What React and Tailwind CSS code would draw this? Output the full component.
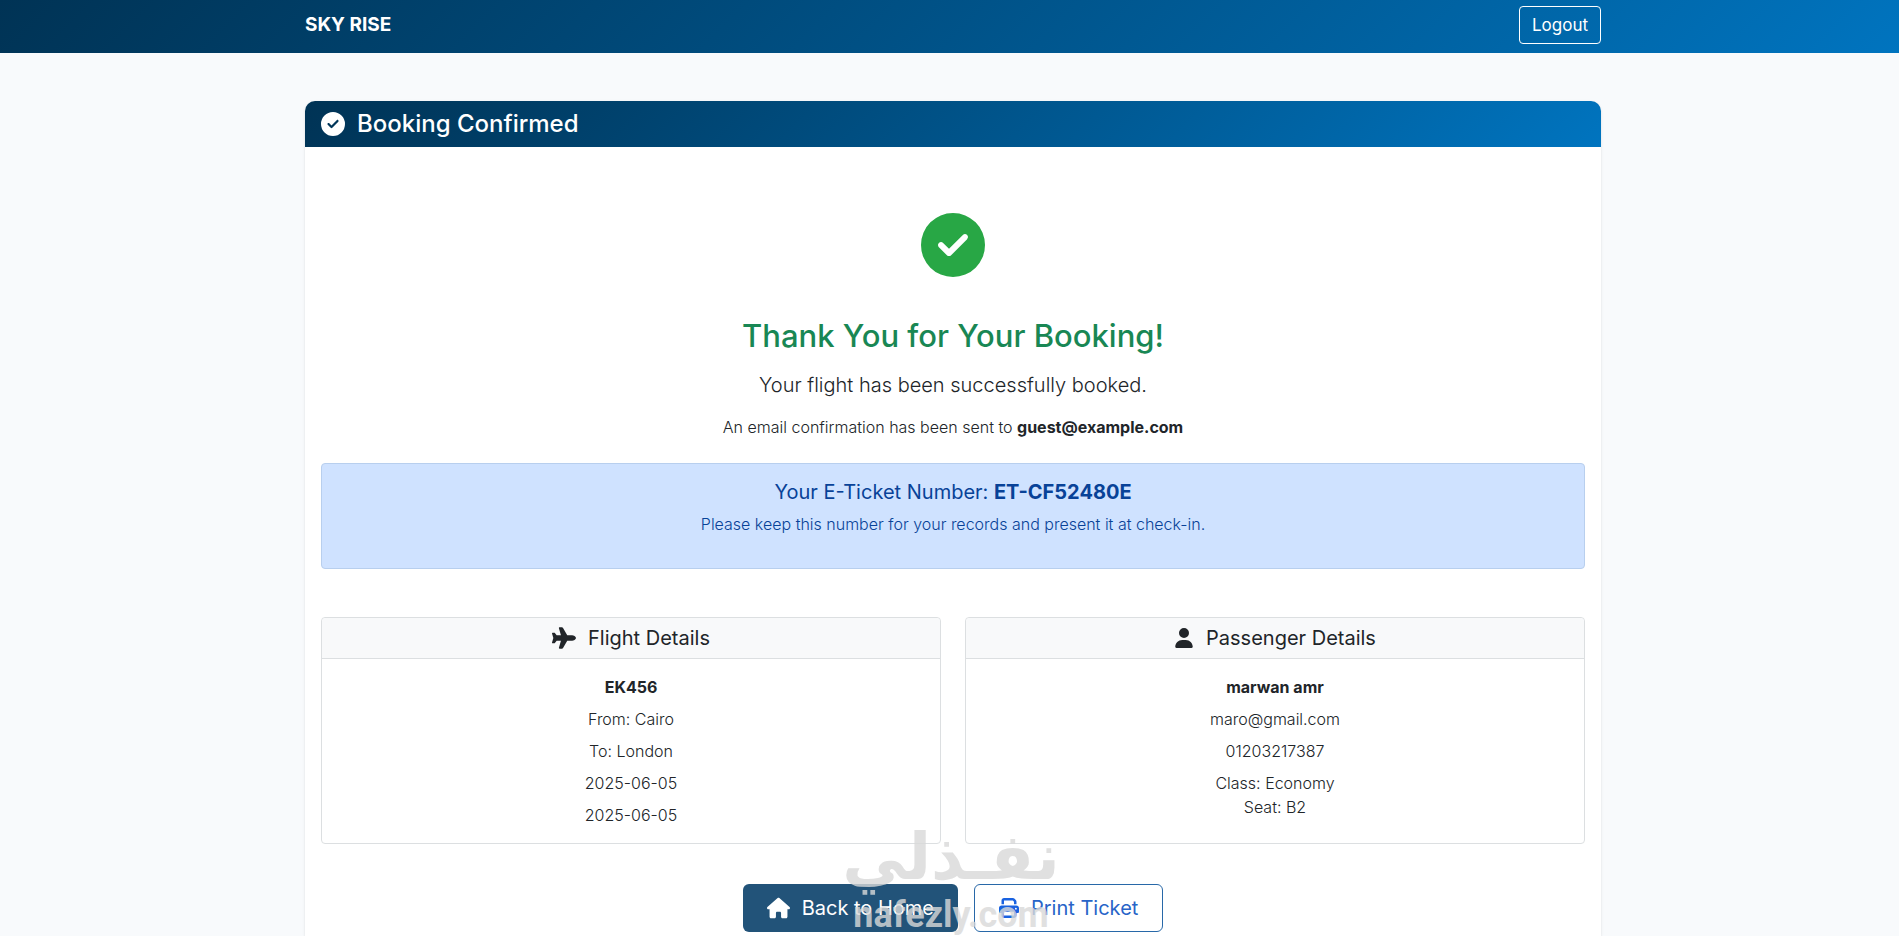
import React from "react";
import { FaPlane, FaUser, FaPrint, FaCircleCheck, FaHouse } from "react-icons/fa6";

const flightLines = ["From: Cairo", "To: London", "2025-06-05", "2025-06-05"];

const DetailCard = ({ icon, title, children }) => (
  <section className="rounded border border-[#dcdfe1] bg-white">
    <h5 className="flex items-center justify-center gap-3 rounded-t border-b border-[#dcdfe1] bg-[#f8f9fa] py-2 text-xl font-normal leading-6">
      {icon}
      {title}
    </h5>
    <div className="space-y-2 p-4">{children}</div>
  </section>
);

const Watermark = () => (
  <div className="pointer-events-none absolute bottom-0 left-[839px] w-56 pb-px text-center text-[#d9d9d9] opacity-80">
    <p
      lang="ar"
      dir="rtl"
      className="mb-1.5 font-['DejaVu_Sans',sans-serif] text-[64px] font-bold leading-[64px]"
    >
      نفـذلي
    </p>
    <p className="font-[Roboto,sans-serif] text-[36px] font-bold leading-10">nafezly.com</p>
  </div>
);

const App = () => {
  return (
    <div className="relative flex min-h-screen flex-col bg-[#f8fafc] font-[Inter,sans-serif] text-[#212529]">
      <nav className="bg-linear-135 from-[#003355] to-[#0074bf] pt-1.5 pb-[9px] pl-[7px]">
        <div className="mx-auto flex max-w-[1320px] items-center justify-between px-3">
          <a href="#" className="text-[19px] font-bold text-white">
            SKY RISE
          </a>
          <button className="rounded border border-white px-3 py-1.5 text-[17px] leading-6 text-white">
            Logout
          </button>
        </div>
      </nav>

      <main className="flex flex-1 flex-col pt-12 pl-[7px]">
        <div className="mx-auto flex w-full max-w-[1320px] flex-1 flex-col px-3">
          <div className="flex-1 rounded-t-[10px] bg-white shadow-sm">
            <h4 className="flex items-center gap-3 rounded-t-[10px] bg-linear-135 from-[#003355] to-[#0074bf] px-4 py-2 text-2xl font-medium leading-[30px] text-white">
              <FaCircleCheck />
              Booking Confirmed
            </h4>

            <div className="px-4 pt-16 text-center">
              <FaCircleCheck className="mx-auto mt-0.5 size-16 text-[#28a745]" />
              <h2 className="mt-10 text-[31px] font-medium leading-[38px] text-[#198754]">
                Thank You for Your Booking!
              </h2>
              <p className="mt-3.5 text-xl font-light leading-8">
                Your flight has been successfully booked.
              </p>
              <p className="mt-3.5 font-light leading-6">
                An email confirmation has been sent to{" "}
                <strong className="font-bold">guest@example.com</strong>
              </p>

              <div className="mt-6 rounded border border-[#b8cfee] bg-[#cfe2ff] px-4 pt-4 pb-8 text-[#084298]">
                <h5 className="text-xl leading-6">
                  Your E-Ticket Number: <strong>ET-CF52480E</strong>
                </h5>
                <p className="mt-2 font-light leading-6">
                  Please keep this number for your records and present it at check-in.
                </p>
              </div>

              <div className="mt-12 grid grid-cols-2 gap-6 font-light">
                <DetailCard icon={<FaPlane className="size-6" />} title="Flight Details">
                  <p className="font-bold">EK456</p>
                  {flightLines.map((line, i) => (
                    <p key={i}>{line}</p>
                  ))}
                </DetailCard>
                <DetailCard icon={<FaUser className="size-5" />} title="Passenger Details">
                  <p className="font-bold">marwan amr</p>
                  <p>maro@gmail.com</p>
                  <p>01203217387</p>
                  <p>
                    Class: Economy
                    <br />
                    Seat: B2
                  </p>
                </DetailCard>
              </div>

              <div className="mt-10 flex justify-center gap-4">
                <a
                  href="#"
                  className="flex h-12 items-center gap-3 rounded-md bg-[#225379] px-6 text-xl text-white"
                >
                  <FaHouse className="h-6 w-[23px]" />
                  Back to Home
                </a>
                <button className="flex h-12 items-center gap-3 rounded-md border border-[#2868a8] bg-white px-6 text-xl text-[#2864c8]">
                  <FaPrint className="text-[#1a62e0]" />
                  Print Ticket
                </button>
              </div>
            </div>
          </div>
        </div>
      </main>

      <Watermark />
    </div>
  );
};

export default App;
